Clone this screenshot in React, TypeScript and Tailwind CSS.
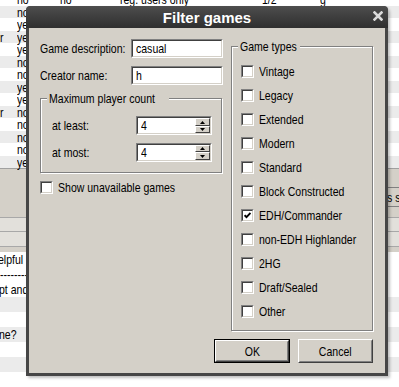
import React from "react";

function T({ children, center = false }: { children: React.ReactNode; center?: boolean }) {
  return (
    <span
      className={
        "inline-block whitespace-nowrap scale-x-[0.81] leading-none " + (center ? "origin-center" : "origin-left")
      }
    >
      {children}
    </span>
  );
}

function Check({ checked = false }: { checked?: boolean }) {
  return (
    <div className="w-[13px] h-[13px] shrink-0 border border-t-[#808080] border-l-[#808080] border-b-white border-r-white">
      <div className="w-full h-full border border-t-[#404040] border-l-[#404040] border-b-[#d4d0c8] border-r-[#d4d0c8] bg-white flex items-center justify-center">
        {checked && (
          <svg width="7" height="7" viewBox="0 0 7 7">
            <polyline points="0.6,3.2 2.5,5.2 6.5,1" fill="none" stroke="black" strokeWidth="1.9" />
          </svg>
        )}
      </div>
    </div>
  );
}

function Sunken({ children, className = "" }: { children?: React.ReactNode; className?: string }) {
  return (
    <div className={"h-[19px] shrink-0 border border-t-[#808080] border-l-[#808080] border-b-white border-r-white " + className}>
      <div className="relative w-full h-full border border-t-[#404040] border-l-[#404040] border-b-[#d4d0c8] border-r-[#d4d0c8] bg-white flex items-center pl-[3px] leading-none">
        {children}
      </div>
    </div>
  );
}

function SpinBtn({ up }: { up: boolean }) {
  return (
    <div className="w-[15px] h-[7.5px] bg-[#d4d0c8] border border-t-white border-l-white border-b-[#404040] border-r-[#404040] flex items-center justify-center">
      <svg width="5" height="3" viewBox="0 0 5 3">
        {up ? <polygon points="2.5,0 5,3 0,3" fill="black" /> : <polygon points="0,0 5,0 2.5,3" fill="black" />}
      </svg>
    </div>
  );
}

function Spin({ value }: { value: string }) {
  return (
    <Sunken className="w-[76px]">
      <T>{value}</T>
      <div className="ml-auto flex flex-col">
        <SpinBtn up />
        <SpinBtn up={false} />
      </div>
    </Sunken>
  );
}

function Btn({ label, def = false, w }: { label: string; def?: boolean; w: string }) {
  return (
    <div className={(def ? "border border-black " : "") + w + " h-[24px]"}>
      <div className="w-full h-full border border-t-white border-l-white border-b-[#404040] border-r-[#404040]">
        <div className="w-full h-full border border-t-[#d4d0c8] border-l-[#d4d0c8] border-b-[#808080] border-r-[#808080] flex items-center justify-center">
          <T center>{label}</T>
        </div>
      </div>
    </div>
  );
}

const gameTypes = [
  "Vintage",
  "Legacy",
  "Extended",
  "Modern",
  "Standard",
  "Block Constructed",
  "EDH/Commander",
  "non-EDH Highlander",
  "2HG",
  "Draft/Sealed",
  "Other",
];

const leftRows: { t: string; r?: boolean }[] = [
  { t: "no" },
  { t: "no" },
  { t: "yes" },
  { t: "yes", r: true },
  { t: "yes" },
  { t: "no" },
  { t: "no" },
  { t: "yes" },
  { t: "yes" },
  { t: "no", r: true },
  { t: "no" },
  { t: "no" },
  { t: "no" },
  { t: "yes" },
];

export default function App() {
  return (
    <div className="relative w-[399px] h-[387px] overflow-hidden bg-white text-black text-[13px] font-['Liberation_Sans',Arial,sans-serif]">
      {/* background application */}
      <div className="flex flex-col -mt-[7px]">
        {leftRows.map((row, i) => (
          <div
            key={i}
            className={
              "flex leading-none shrink-0 " +
              (i === 0 ? "items-start " : "items-center ") +
              (i % 2 === 0 ? "h-[13px] bg-white" : "h-[12px] bg-[#ebebeb]")
            }
          >
            <div className="w-[17px] shrink-0">{row.r ? <T>r</T> : null}</div>
            <div className="w-[43px] shrink-0">
              <T>{row.t}</T>
            </div>
            {i === 0 && (
              <>
                <div className="w-[60px] shrink-0">
                  <T>no</T>
                </div>
                <div className="w-[142px] shrink-0">
                  <T>reg. users only</T>
                </div>
                <div className="w-[58px] shrink-0">
                  <T>1/2</T>
                </div>
                <div className="shrink-0">
                  <T>g</T>
                </div>
              </>
            )}
          </div>
        ))}
        {/* panel */}
        <div className="h-[49px] bg-[#d4d0c8] border-t border-[#a0a0a0] flex items-start pt-[18px]">
          <div className="ml-[362px] w-[60px] h-[20px] border border-[#808080] bg-[#d4d0c8] flex items-center pl-[24px] shrink-0">
            <T>s s</T>
          </div>
        </div>
        <div className="h-[14px] bg-[#e2e0db] border-t border-[#a8a8a8]" />
        <div className="h-[15px] bg-[#e2e0db] border-t border-[#a8a8a8]" />
        <div className="h-[6px] bg-[#d4d0c8] border-t border-[#a8a8a8]" />
        {/* text list */}
        <div className="flex flex-col leading-none">
          <div className="h-[15px] flex items-center bg-white -ml-[2px]">
            <T>elpful</T>
          </div>
          <div className="h-[15px] flex items-center bg-white">
            <T>-----------</T>
          </div>
          <div className="h-[15px] flex items-center bg-white -ml-[1px]">
            <T>pt and</T>
          </div>
          <div className="h-[15px] bg-[#ebebeb]" />
          <div className="h-[15px] bg-white" />
          <div className="h-[15px] flex items-center bg-[#ebebeb] -ml-[1px]">
            <T>ne?</T>
          </div>
          <div className="h-[15px] bg-white" />
          <div className="h-[15px] bg-[#ebebeb]" />
          <div className="h-[15px] bg-white" />
        </div>
      </div>

      {/* dialog */}
      <div className="absolute left-[26px] top-[6px] w-[362px] h-[370px] flex flex-col bg-[#464646] rounded-t-[5px] px-[3px] pb-[3px] shadow-[2px_2px_3px_rgba(0,0,0,0.25)]">
        <div className="relative h-[22px] shrink-0 flex items-center justify-center rounded-t-[4px] bg-gradient-to-b from-[#4e4e4e] to-[#2f2f2f] -mx-[3px]">
          <span className="text-white font-bold text-[15px] leading-none">Filter games</span>
          <svg className="absolute right-[5px] top-[5px]" width="10" height="10" viewBox="0 0 10 10">
            <path d="M1.5 1.5 L8.5 8.5 M8.5 1.5 L1.5 8.5" stroke="#dadada" strokeWidth="2.6" strokeLinecap="square" />
          </svg>
        </div>
        <div className="flex-1 bg-[#d4d0c8] flex flex-col pl-[11px] pr-[12px]">
          <div className="flex items-start gap-[8px]">
            {/* left column */}
            <div className="w-[183px] pt-[11px] flex flex-col">
              <div className="flex items-center">
                <div className="w-[91px]">
                  <T>Game description:</T>
                </div>
                <Sunken className="w-[92px]">
                  <T>casual</T>
                </Sunken>
              </div>
              <div className="flex items-center mt-[7px]">
                <div className="w-[91px]">
                  <T>Creator name:</T>
                </div>
                <Sunken className="w-[92px]">
                  <T>h</T>
                </Sunken>
              </div>
              <div className="relative mt-[13px] h-[75px] w-[182px] border border-[#808080] shadow-[inset_1px_1px_0_#fff,1px_1px_0_#fff] pt-[17px] pl-[11px] flex flex-col gap-[7px]">
                <div className="absolute -top-[8px] left-[6px] w-[122px] px-[2px] bg-[#d4d0c8] h-[15px] flex items-center">
                  <T>Maximum player count</T>
                </div>
                <div className="flex items-center">
                  <div className="w-[84px]">
                    <T>at least:</T>
                  </div>
                  <Spin value="4" />
                </div>
                <div className="flex items-center">
                  <div className="w-[84px]">
                    <T>at most:</T>
                  </div>
                  <Spin value="4" />
                </div>
              </div>
              <div className="flex items-center gap-[5px] mt-[8px] h-[13px]">
                <Check />
                <T>Show unavailable games</T>
              </div>
            </div>
            {/* right column */}
            <div className="relative mt-[18px] w-[142px] h-[285px] border border-[#808080] shadow-[inset_1px_1px_0_#fff,1px_1px_0_#fff] pt-[18px] pl-[9px] flex flex-col gap-[11px]">
              <div className="absolute -top-[8px] left-[6px] w-[62px] px-[2px] bg-[#d4d0c8] h-[15px] flex items-center">
                <T>Game types</T>
              </div>
              {gameTypes.map((g) => (
                <div key={g} className="flex items-center gap-[5px] h-[13px]">
                  <Check checked={g === "EDH/Commander"} />
                  <T>{g}</T>
                </div>
              ))}
            </div>
          </div>
          <div className="flex justify-end gap-[8px] mt-[8px]">
            <Btn label="OK" def w="w-[76px]" />
            <Btn label="Cancel" w="w-[75px]" />
          </div>
        </div>
      </div>
    </div>
  );
}
